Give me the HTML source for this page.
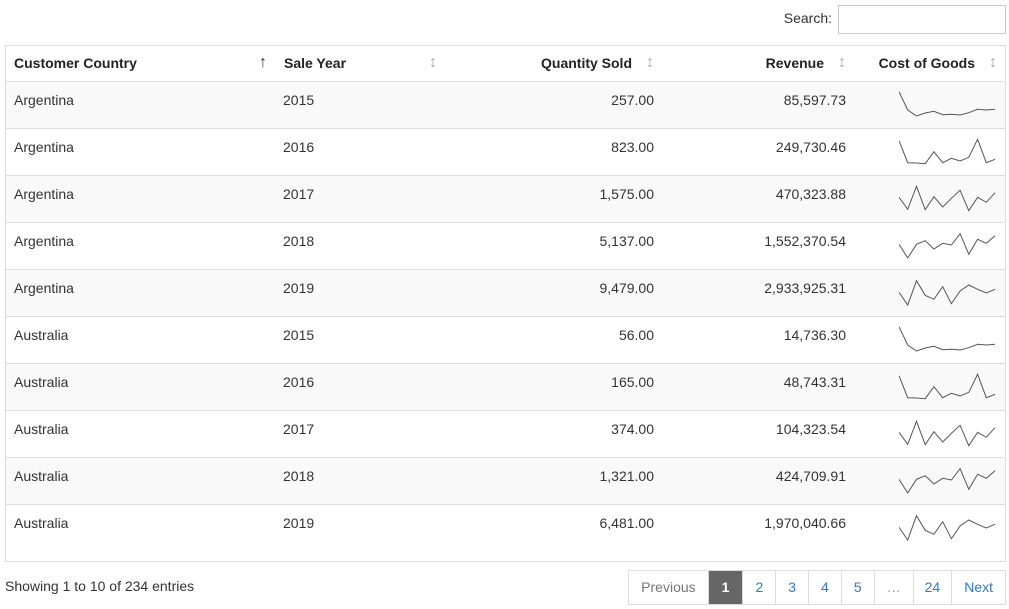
<!DOCTYPE html>
<html><head><meta charset="utf-8"><style>
*{box-sizing:border-box;margin:0;padding:0}
body{width:1009px;height:609px;background:#fff;font-family:"Liberation Sans",Arial,sans-serif;font-size:14px;color:#333;position:relative;overflow:hidden}
.search{position:absolute;top:10px;right:3px;font-size:14px;color:#333}
.search span{position:absolute;right:174px;top:0;white-space:nowrap}
.search input{position:absolute;right:0;top:-5px;width:168px;height:29px;border:1px solid #ccc}
.tbl{position:absolute;left:5px;top:45px;width:1001px;height:517px;border:1px solid #ddd}
.row{position:absolute;left:0;width:999px;height:47px;border-top:1px solid #ddd}
.hdr{top:0;height:35px;border-top:none;font-weight:bold;color:#222}
.c{position:absolute;top:0;line-height:36px}
.hdr .c{top:-1px}
.arr{position:absolute;color:#aaa;font-weight:normal;font-size:16px;top:0;line-height:34px}
.odd{background:#f9f9f9}
.pg{position:absolute;top:570px;right:3px;display:flex;border:1px solid #ddd;height:35px;font-size:14px}
.pg div{line-height:33px;padding:0 12px;color:#337ab7;border-left:1px solid #ddd;text-align:center}
.pg div:first-child{border-left:none;color:#777}
.pg .act{background:#666;color:#fff;font-weight:bold;padding:0 13px}
.info{position:absolute;left:5px;top:578px}
</style></head><body>
<div class="search"><span>Search:</span><input></div>
<div class="tbl">
<div class="row hdr">
<div class="c" style="left:8px">Customer Country</div><div class="arr" style="left:253px;color:#333">↑</div>
<div class="c" style="left:278px">Sale Year</div><div class="arr" style="left:423px">↕</div>
<div class="c" style="right:373px">Quantity Sold</div><div class="arr" style="left:640px">↕</div>
<div class="c" style="right:181px">Revenue</div><div class="arr" style="left:832px">↕</div>
<div class="c" style="right:30px">Cost of Goods</div><div class="arr" style="left:983px">↕</div>
</div>
<div id="rows"></div>
</div>
<div class="info">Showing 1 to 10 of 234 entries</div>
<div class="pg"><div>Previous</div><div class="act">1</div><div>2</div><div>3</div><div>4</div><div>5</div><div style="color:#999">…</div><div style="padding:0 11px">24</div><div>Next</div></div>
<script>
var data=[["Argentina","2015","257.00","85,597.73"],["Argentina","2016","823.00","249,730.46"],["Argentina","2017","1,575.00","470,323.88"],["Argentina","2018","5,137.00","1,552,370.54"],["Argentina","2019","9,479.00","2,933,925.31"],["Australia","2015","56.00","14,736.30"],["Australia","2016","165.00","48,743.31"],["Australia","2017","374.00","104,323.54"],["Australia","2018","1,321.00","424,709.91"],["Australia","2019","6,481.00","1,970,040.66"]];
var sp=[[10.7,29,35,32,30.3,33.7,33.3,34,31.7,28.3,29,28.3],[12.7,34.7,35,35.7,23.7,34.7,30.3,33,29.3,11.3,34.7,31.3],[22.3,34.3,11.3,34.7,21.7,32,23.3,15.3,35.7,22.3,27.3,17.7],[22.3,36,22.3,18.7,27,21.3,23,11.7,32.3,17.3,21.3,13.7],[23.3,36,11.7,26.3,30.3,17.7,34.7,22,16,20.3,24,20.3]];
var h="";
for(var i=0;i<10;i++){var d=data[i],s=sp[i%5],p=[];
for(var j=0;j<12;j++)p.push((j*8.73).toFixed(1)+","+(s[j]-1));
h+='<div class="row'+(i%2==0?' odd':'')+'" style="top:'+(35+i*47)+'px"><div class="c" style="left:8px">'+d[0]+'</div><div class="c" style="left:277px">'+d[1]+'</div><div class="c" style="right:351px">'+d[2]+'</div><div class="c" style="right:159px">'+d[3]+'</div><svg style="position:absolute;left:893px;top:0" width="100" height="47"><polyline points="'+p.join(" ")+'" fill="none" stroke="#555" stroke-width="1"/></svg></div>';}
document.getElementById("rows").innerHTML=h;
</script>
</body></html>
